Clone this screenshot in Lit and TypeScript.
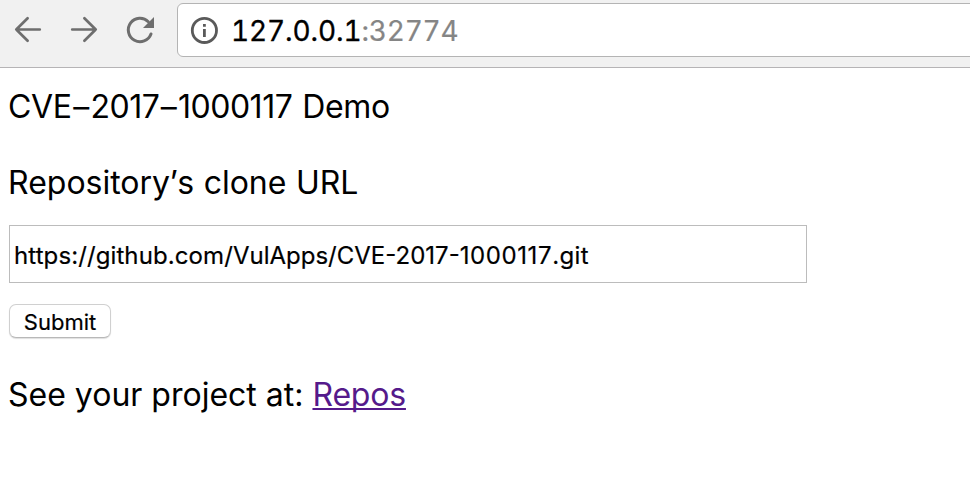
import { LitElement, html, css } from "lit";
import { customElement } from "lit/decorators.js";

@customElement("browser-bar")
class BrowserBar extends LitElement {
  static styles = css`
    :host { display: flex; box-sizing: border-box; height: 68px; background: #f1f1f1; border-bottom: 1px solid #b6b4b6; font-family: Inter, sans-serif; overflow: hidden; }
    .nav { display: block; flex: none; width: 177px; height: 67px; }
    .address { box-sizing: border-box; display: flex; align-items: center; flex: 1; height: 54px; margin-top: 3px; margin-right: -10px; border: 1px solid #b4b4b4; border-radius: 6px; background: #fff; }
    .info { flex: none; width: 28px; height: 28px; margin-left: 12px; }
    .url { margin-left: 13px; padding-top: 2px; font-size: 28px; line-height: 34px; font-variant-numeric: tabular-nums; white-space: pre; color: #000; }
    .host { letter-spacing: -0.12px; -webkit-text-stroke: 0.3px #000; }
    .port { color: #858585; letter-spacing: -0.2px; -webkit-text-stroke: 0.2px #858585; }
  `;
  render() {
    return html`
      <svg class="nav" viewBox="0 0 177 67" fill="none" stroke="#6e6e6e" stroke-width="2.7" stroke-linecap="round" stroke-linejoin="round">
        <path d="M39.8 29.5H16.3M27.6 18.2L16.3 29.5L27.6 40.8"></path>
        <path d="M72.2 29.5H95.7M84.4 18.2L95.7 29.5L84.4 40.8"></path>
        <path d="M148.3 21.7A11.7 11.7 0 1 0 151 34" stroke-width="3"></path>
        <path d="M154 17V28H143Z" fill="#6e6e6e" stroke="none"></path>
      </svg>
      <div class="address">
        <svg class="info" viewBox="0 0 28 28" fill="none">
          <circle cx="14.4" cy="14.4" r="12.1" stroke="#5a5a5a" stroke-width="2.8"></circle>
          <path d="M13 8H15.8V10.7H13ZM13 13H15.8V21H13Z" fill="#5a5a5a"></path>
        </svg>
        <div class="url"><span class="host">127.0.0.1</span><span class="port">:32774</span></div>
      </div>
    `;
  }
}

@customElement("clone-form")
class CloneForm extends LitElement {
  static styles = css`
    :host { display: block; padding: 20px 8px 0; font-family: Inter, sans-serif; font-size: 32px; line-height: 38px; color: #000; }
    .line { white-space: pre; }
    .title { letter-spacing: -0.3px; word-spacing: 1.2px; }
    .digits { letter-spacing: -0.5px; }
    .dash { margin: 0 1.5px; }
    .label { display: block; margin-top: 38px; word-spacing: 0.5px; }
    .mark { margin: 0 -0.6px 0 -0.6px; }
    .field { box-sizing: border-box; width: 798px; height: 58px; margin: 23px 0 0 1px; padding: 3px 4px 0; border: 1px solid #bcbcbc; background: #fff; font-size: 24px; line-height: 53px; white-space: pre; -webkit-text-stroke: 0.2px #000; }
    .origin { letter-spacing: 0.1px; }
    .number { letter-spacing: 0.6px; }
    .suffix { letter-spacing: 0.4px; }
    .submit { box-sizing: border-box; display: block; width: 102px; height: 34px; margin: 21px 0 0 1px; padding: 2px 0 0; border: 1px solid #d0d0d0; border-bottom-color: #b8b8b8; border-radius: 7px; background: #fff; box-shadow: 0 1px 1px rgba(0, 0, 0, 0.13); font: 400 22px/30px Inter, sans-serif; color: #000; -webkit-text-stroke: 0.2px #000; }
    .footer { margin-top: 38px; }
    .link { color: #551a8b; letter-spacing: -0.2px; text-decoration: underline; text-decoration-thickness: 2px; text-underline-offset: 2px; text-decoration-skip-ink: none; }
  `;
  render() {
    return html`
      <div class="line title">CVE<span class="dash">–</span><span class="digits">2017</span><span class="dash">–</span><span class="digits">1000117</span> Demo</div>
      <div class="line label">Repository<span class="mark">’</span>s clone URL</div>
      <div class="field" role="textbox" tabindex="0"><span class="origin">https://github.com/</span>VulApps/CVE-2017-<span class="number">1000117</span><span class="suffix">.git</span></div>
      <button class="submit" type="button">Submit</button>
      <div class="line footer">See your project at: <a class="link" href="#">Repos</a></div>
    `;
  }
}

@customElement("app-root")
class AppRoot extends LitElement {
  static styles = css`
    :host { display: block; height: 480px; overflow: hidden; background: #fff; }
  `;
  render() {
    return html`<browser-bar></browser-bar><clone-form></clone-form>`;
  }
}
